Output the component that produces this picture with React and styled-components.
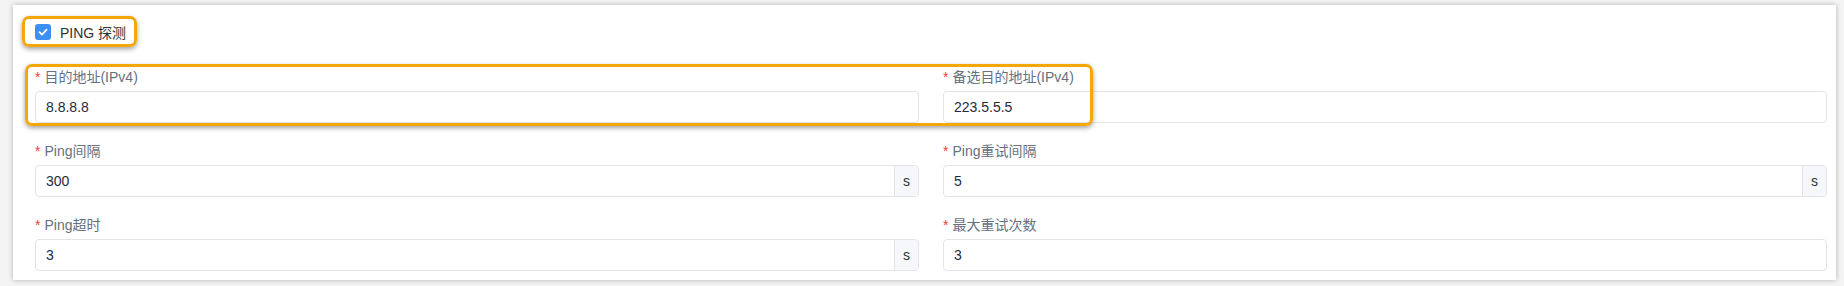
import React from "react";
import styled, { createGlobalStyle } from "styled-components";

const GlobalStyle = createGlobalStyle`
  body {
    margin: 0;
    background: #f4f4f4;
    font-family: "Liberation Sans", "Noto Sans CJK SC", sans-serif;
  }
`;

const Page = styled.div`
  padding: 5px 8px 6px 13px;
`;

const Card = styled.div`
  position: relative;
  background: #fff;
  width: 1823px;
  box-sizing: border-box;
  padding: 17px 9px 9px 22px;
  box-shadow: 0 0 5px rgba(0, 0, 0, 0.28);
`;

const CheckRow = styled.label`
  display: flex;
  align-items: center;
  gap: 9px;
  height: 20px;
  font-size: 14px;
  color: #303133;
`;

const CheckBox = styled.span`
  width: 16px;
  height: 16px;
  border-radius: 3px;
  background: #3d8ff5;
  display: flex;
  align-items: center;
  justify-content: center;
`;

const Grid = styled.div`
  margin-top: 25px;
  display: grid;
  grid-template-columns: 1fr 1fr;
  column-gap: 24px;
  row-gap: 18px;
`;

const Field = styled.div`
  display: flex;
  flex-direction: column;
`;

const Label = styled.div`
  font-size: 14px;
  line-height: 20px;
  height: 20px;
  margin-bottom: 4px;
  color: #66707e;
  &::before {
    content: "*";
    color: #f23c3c;
    margin-right: 4px;
  }
`;

const InputGroup = styled.div`
  display: flex;
  height: 32px;
  box-sizing: border-box;
  border: 1px solid #e2e4ea;
  border-radius: 4px;
  overflow: hidden;
`;

const Input = styled.input`
  flex: 1;
  min-width: 0;
  border: none;
  outline: none;
  padding: 0 10px;
  font: 14px "Liberation Sans", "Noto Sans CJK SC", sans-serif;
  color: #1f2a3a;
  background: transparent;
`;

const Suffix = styled.span`
  width: 23px;
  flex: none;
  display: flex;
  align-items: center;
  justify-content: center;
  background: #f5f7fa;
  border-left: 1px solid #e2e4ea;
  font-size: 14px;
  color: #333;
`;

const Highlight = styled.div`
  position: absolute;
  left: ${(p) => p.$left}px;
  top: ${(p) => p.$top}px;
  width: ${(p) => p.$width}px;
  height: ${(p) => p.$height}px;
  box-sizing: border-box;
  border: 3px solid #f5a70a;
  border-radius: 7px;
  box-shadow: 0 2px 5px rgba(0, 0, 0, 0.38);
  pointer-events: none;
`;

const fields = [
  { label: "目的地址(IPv4)", value: "8.8.8.8" },
  { label: "备选目的地址(IPv4)", value: "223.5.5.5" },
  { label: "Ping间隔", value: "300", suffix: "s" },
  { label: "Ping重试间隔", value: "5", suffix: "s" },
  { label: "Ping超时", value: "3", suffix: "s" },
  { label: "最大重试次数", value: "3" },
];

const App = () => {
  return (
    <Page>
      <GlobalStyle />
      <Card>
        <CheckRow>
          <CheckBox>
            <svg width="12" height="12" viewBox="0 0 12 12">
              <path
                d="M2.5 6.2 L5 8.6 L9.6 3.6"
                fill="none"
                stroke="#fff"
                strokeWidth="1.8"
                strokeLinecap="round"
                strokeLinejoin="round"
              />
            </svg>
          </CheckBox>
          PING 探测
        </CheckRow>
        <Grid>
          {fields.map((f) => (
            <Field key={f.label}>
              <Label>{f.label}</Label>
              <InputGroup>
                <Input defaultValue={f.value} />
                {f.suffix && <Suffix>{f.suffix}</Suffix>}
              </InputGroup>
            </Field>
          ))}
        </Grid>
        <Highlight $left={9} $top={11} $width={115} $height={31} />
        <Highlight $left={12} $top={59} $width={1068} $height={62} />
      </Card>
    </Page>
  );
};

export default App;
